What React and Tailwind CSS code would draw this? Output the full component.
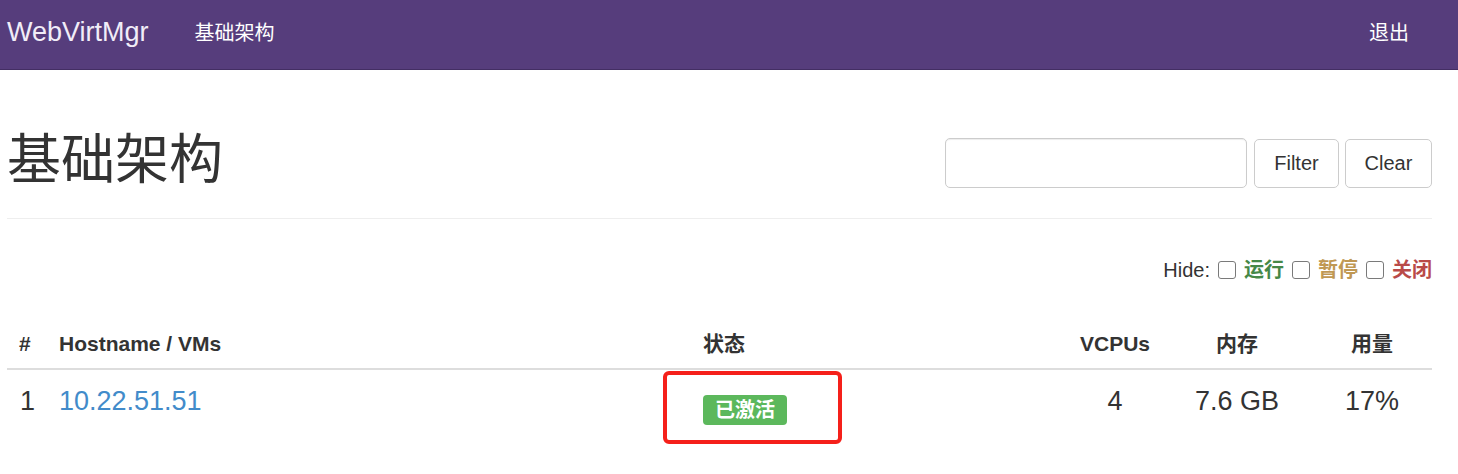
import { useState } from "react";

const hosts = [
  { id: 1, name: "10.22.51.51", status: "已激活", vcpus: 4, memory: "7.6 GB", usage: "17%" },
];

const font = "font-['Liberation_Sans','Noto_Sans_CJK_SC',sans-serif]";

const Navbar = () => (
  <div className="flex h-[70px] items-center justify-between border-b border-[#432e63] bg-[#563d7c] pb-1 pl-[7px] pr-[49px]">
    <div className="flex items-center">
      <span className="text-[27px] leading-none text-[#f1edf8]">WebVirtMgr</span>
      <a href="#" className="ml-[46px] text-[20px] leading-none text-white">基础架构</a>
    </div>
    <a href="#" className="text-[20px] leading-none text-white">退出</a>
  </div>
);

const HideFilters = () => {
  const [hidden, setHidden] = useState({ running: false, paused: false, stopped: false });
  const toggle = (key) => setHidden((prev) => ({ ...prev, [key]: !prev[key] }));

  // checkbox + coloured label, same look for all three
  const items = [
    { key: "running", label: "运行", color: "text-[#468847]" },
    { key: "paused", label: "暂停", color: "text-[#c09853]" },
    { key: "stopped", label: "关闭", color: "text-[#b94a48]" },
  ];

  return (
    <div className="mt-[37px] flex items-center justify-end gap-2 text-[20px] leading-[28px] text-[#333]">
      <span>Hide:</span>
      {items.map((item) => (
        <label key={item.key} className="flex items-center gap-2">
          <input
            type="checkbox"
            checked={hidden[item.key]}
            onChange={() => toggle(item.key)}
            className="h-[18px] w-[18px] appearance-none rounded-[3px] border-[1.5px] border-[#7a7a7a] bg-white"
          />
          <span className={`font-bold ${item.color}`}>{item.label}</span>
        </label>
      ))}
    </div>
  );
};

const HostTable = () => (
  <div className="mt-[34px] text-[#333]">
    <div className="grid grid-cols-[40px_644px_377px_94px_150px_120px] border-b-2 border-[#ddd] text-[21px] font-bold leading-[28px]">
      <div className="pb-[10px] pl-3 pt-3">#</div>
      <div className="pb-[10px] pl-3 pt-3">Hostname / VMs</div>
      <div className="pb-[10px] pl-3 pt-3">状态</div>
      <div className="pb-[10px] pt-3 text-center">VCPUs</div>
      <div className="pb-[10px] pt-3 text-center">内存</div>
      <div className="pb-[10px] pt-3 text-center">用量</div>
    </div>
    {hosts.map((host) => (
      <div key={host.id} className="grid grid-cols-[40px_644px_377px_94px_150px_120px] text-[27px] leading-[38px]">
        <div className="py-3 pl-[13px]">{host.id}</div>
        <div className="py-3 pl-3">
          <a href="#" className="text-[#428bca]">{host.name}</a>
        </div>
        <div className="relative pb-6 pl-3 pt-[19px]">
          <span className="inline-block h-[30px] rounded-[4px] bg-[#5cb85c] px-3 text-[20px] font-bold leading-[30px] text-white">
            {host.status}
          </span>
          <div className="absolute -left-[28px] top-[1px] h-[73px] w-[179px] rounded-[6px] border-4 border-[#f5201a]" />
        </div>
        <div className="py-3 text-center">{host.vcpus}</div>
        <div className="py-3 text-center">{host.memory}</div>
        <div className="py-3 text-center">{host.usage}</div>
      </div>
    ))}
  </div>
);

const App = () => {
  const [query, setQuery] = useState("");

  return (
    <div className={`min-h-[474px] bg-white ${font}`}>
      <Navbar />
      <div className="pl-[7px] pr-[26px]">
        <div className="flex items-start justify-between border-b border-[#eee] pb-[28px] pt-[61px]">
          <h1 className="h-[59px] text-[54px] font-normal leading-[59px] text-[#333]">基础架构</h1>
          <div className="mt-[7px] flex items-center">
            <input
              value={query}
              onChange={(e) => setQuery(e.target.value)}
              className="h-[50px] w-[302px] rounded-[5px] border border-[#ccc] px-3 text-[20px] shadow-[inset_0_1px_1px_rgba(0,0,0,0.075)] outline-none"
            />
            <button className="ml-[7px] h-[49px] w-[85px] rounded-[5px] border border-[#ccc] bg-white text-[20px] text-[#333]">Filter</button>
            <button className="ml-[6px] h-[49px] w-[87px] rounded-[5px] border border-[#ccc] bg-white text-[20px] text-[#333]" onClick={() => setQuery("")}>Clear</button>
          </div>
        </div>
        <HideFilters />
        <HostTable />
      </div>
    </div>
  );
};

export default App;
